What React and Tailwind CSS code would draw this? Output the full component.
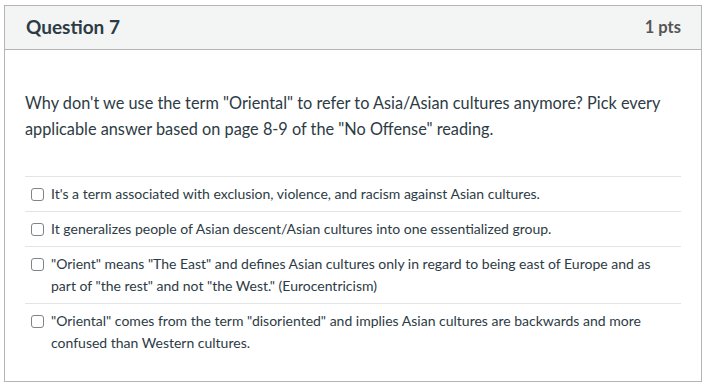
import React from 'react';

const answers = [
  "It's a term associated with exclusion, violence, and racism against Asian cultures.",
  'It generalizes people of Asian descent/Asian cultures into one essentialized group.',
  '"Orient" means "The East" and defines Asian cultures only in regard to being east of Europe and as part of "the rest" and not "the West." (Eurocentricism)',
  '"Oriental" comes from the term "disoriented" and implies Asian cultures are backwards and more confused than Western cultures.',
];

export default function App() {
  return (
    <div className="w-[713px] h-[391px] bg-white pt-[5px] pl-[4px] font-['Lato',sans-serif] text-[#2d3b45]">
      <div className="w-[698px] border border-[#b5b5b5]">
        <div className="h-[44px] bg-[#f3f4f4] border-b border-[#b5b5b5] flex items-center justify-between pl-[21px] pr-[20px]">
          <h2 className="text-[19px] font-bold">Question 7</h2>
          <span className="text-[16.5px] font-bold text-[#555]">1 pts</span>
        </div>
        <div className="px-[20px] pt-[40px] pb-[21px]">
          <p className="text-[16.3px] leading-[26px] pr-[20px]">
            Why don't we use the term "Oriental" to refer to Asia/Asian cultures anymore? Pick every applicable answer based on page 8-9 of the "No Offense" reading.
          </p>
          <div className="mt-[34px]">
            {answers.map((a) => (
              <label key={a} className="flex items-start gap-[7px] border-t border-[#e2e4e5] pl-[6px] pr-[20px] py-[6px] text-[14px] leading-[22px]">
                <span className="mt-[5px] shrink-0 w-[13px] h-[13px] rounded-[3px] border border-[#7d858a] bg-white"></span>
                <span>{a}</span>
              </label>
            ))}
          </div>
        </div>
      </div>
    </div>
  );
}
